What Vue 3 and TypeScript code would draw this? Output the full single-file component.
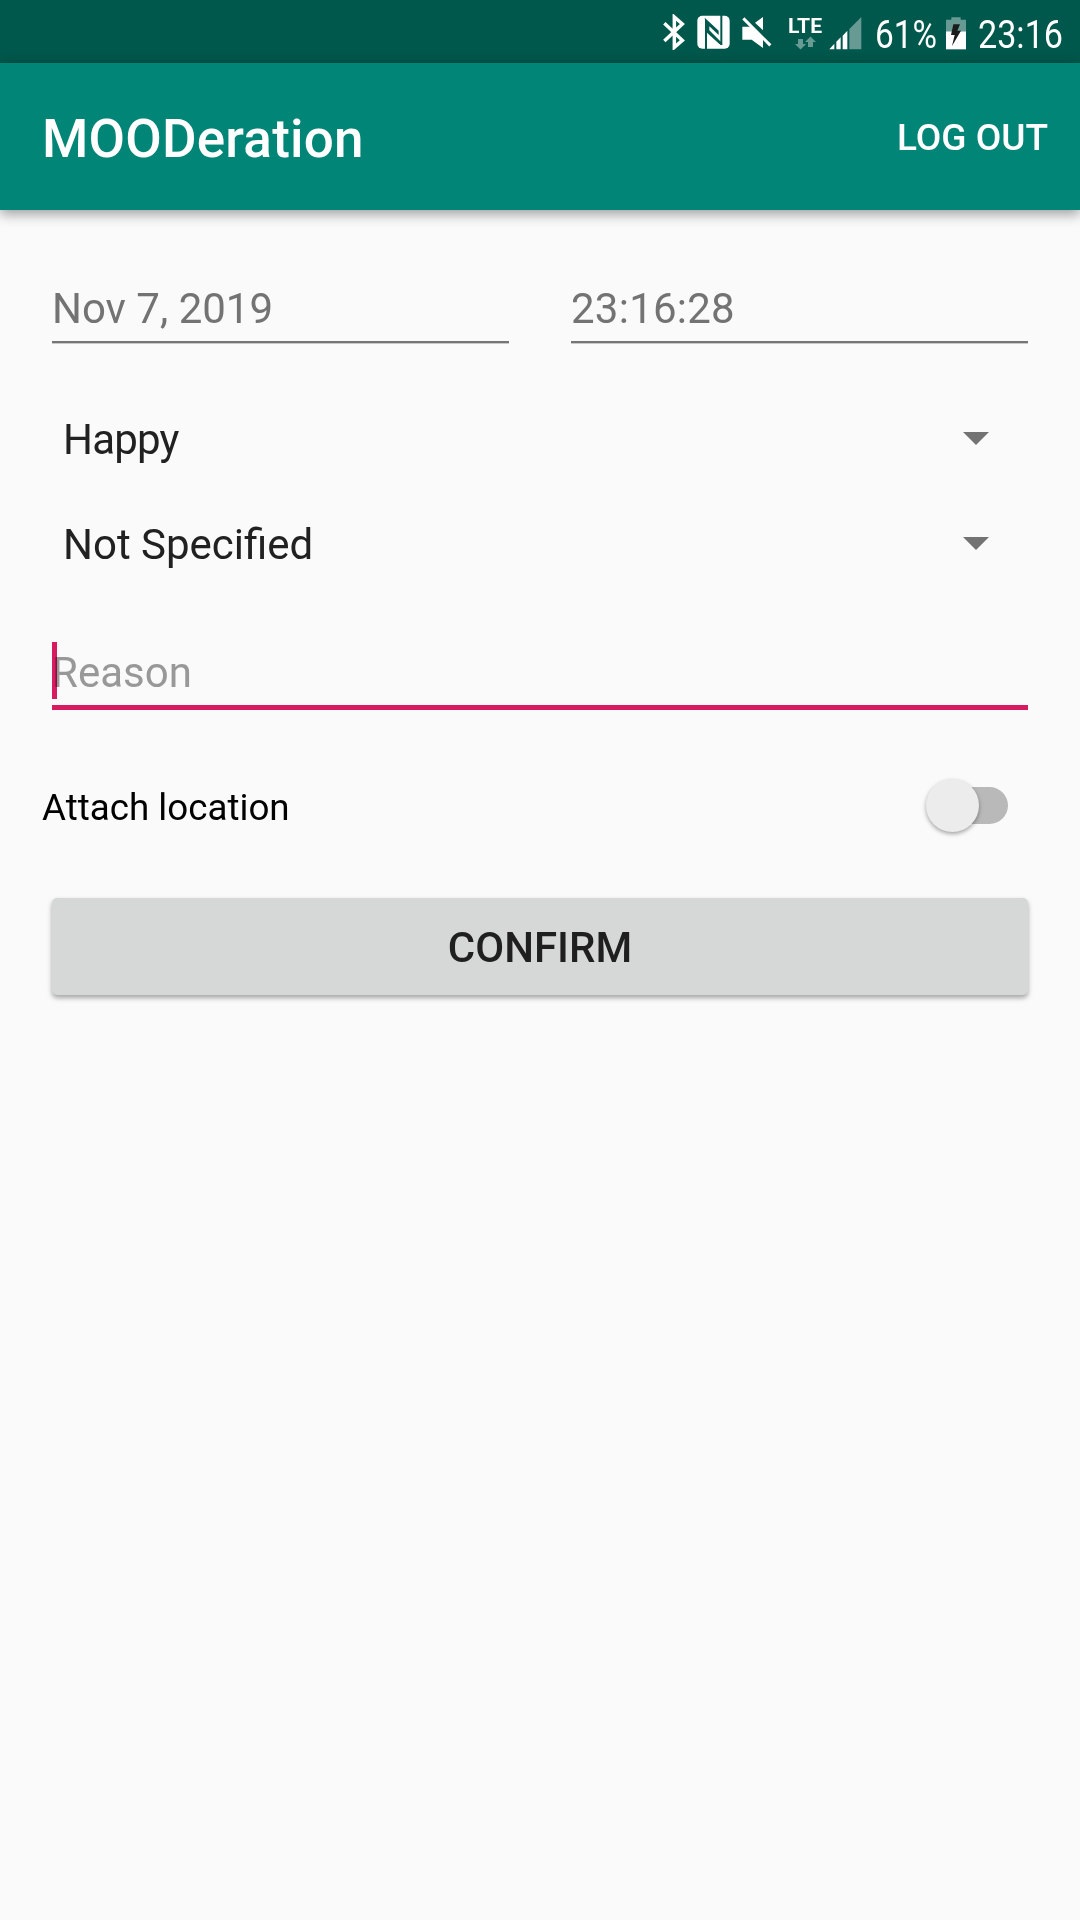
<script setup lang="ts">
import { ref } from 'vue'

const date = ref('Nov 7, 2019')
const time = ref('23:16:28')
const spinners = ref(['Happy', 'Not Specified'])
</script>

<template>
  <main class="screen">
    <header class="status">
      <svg class="bt" width="22" height="36" viewBox="41 43 66 108"><path d="M45 71 99 122 75 143V52L99 73 45 124" fill="none" stroke="#fff" stroke-width="10.500" /></svg>
      <svg class="nfc" width="34" height="34" viewBox="141 46 102 102">
        <rect x="142" y="48" width="97" height="99" rx="15" fill="#fff" />
        <path d="M164 54 206 93V106L178 80V92L216 130V136L208 133 171 99V148H165V60Z" fill="#00574b" />
        <path d="M211 46H217V136H211Z" fill="#00574b" />
      </svg>
      <svg class="mute" width="32" height="34" viewBox="273 48 96 102">
        <path d="M277 80H306L339 113V144L305 119H277ZM339 51V91L315 68Z" fill="#fff" />
        <path d="M280 55 361 136" stroke="#fff" stroke-width="9" />
      </svg>
      <svg class="lte" width="36" height="36" viewBox="786 15 36 36">
        <text x="788" y="33" font-size="20" font-weight="700" fill="#fff" textLength="34" lengthAdjust="spacingAndGlyphs">LTE</text>
        <path d="M798 39h5v5h3l-5.500 5.500-5.500-5.500h3zM808 47h5v-5h3l-5.500-5.500-5.500 5.500h3z" fill="#669a93" />
      </svg>
      <svg class="signal" width="33" height="34" viewBox="539 47 99 102">
        <path d="M636 50V147H600V86Z" fill="#669a93" />
        <path d="M594 91V147H580V106ZM574 111V147H561V124ZM555 130V147H540Z" fill="#fff" />
      </svg>
      <svg class="percent" width="62" height="40" viewBox="0 0 62 40"><text x="0" y="38" textLength="62" lengthAdjust="spacingAndGlyphs">61%</text></svg>
      <svg class="battery" width="20" height="33" viewBox="258 50 60 99">
        <path d="M258 58H274V51H302V58H318V93H258Z" fill="#669a93" />
        <path d="M258 93H318V147H258Z" fill="#fff" />
        <path d="M280 72H300L292 91H303L276 137 284 104H273Z" fill="#1c1c1c" />
      </svg>
      <svg class="clock" width="85" height="40" viewBox="0 0 85 40"><text x="0" y="38" textLength="85" lengthAdjust="spacingAndGlyphs">23:16</text></svg>
    </header>
    <nav class="appbar">
      <h1>MOODeration</h1>
      <button class="logout">LOG OUT</button>
    </nav>
    <section class="form">
      <div class="when">
        <div class="field">{{ date }}</div>
        <div class="field time">{{ time }}</div>
      </div>
      <div v-for="s in spinners" :key="s" class="spinner">
        <span :class="{ tight: s === 'Happy' }">{{ s }}</span>
        <svg width="26" height="13" viewBox="0 0 26 13"><path d="M0 0H26L13 13Z" fill="#737373" /></svg>
      </div>
      <div class="reason"><i class="caret"></i><span>Reason</span></div>
      <div class="attach">
        <span>Attach location</span>
        <div class="switch"><i class="thumb"></i></div>
      </div>
      <button class="confirm">CONFIRM</button>
    </section>
  </main>
</template>

<style>
body { margin: 0; background: #fafafa; }
</style>

<style scoped>
.screen {
  width: 1080px;
  height: 1920px;
  overflow: hidden;
  background: #fafafa;
  font-family: Roboto, sans-serif;
  font-size: 42px;
}
svg { display: block; flex: none; }
button { border: 0; padding: 0; font-family: inherit; }
.status {
  box-sizing: border-box;
  height: 63px;
  padding-left: 663px;
  display: flex;
  align-items: flex-start;
  background: #00574b;
}
.status text { font-family: Roboto, sans-serif; }
.bt { margin-top: 14px; }
.nfc { margin: 15px 0 0 12px; }
.mute { margin: 16px 0 0 10px; }
.lte { margin: 15px 0 0 13px; overflow: visible; }
.signal { margin: 16px 0 0 7px; }
.percent { margin: 9.5px 0 0 13px; font-size: 39.5px; fill: #fff; overflow: visible; }
.battery { margin: 17px 0 0 9px; }
.clock { margin: 9.5px 0 0 12px; font-size: 39.5px; fill: #fff; overflow: visible; }
.appbar {
  box-sizing: border-box;
  height: 147px;
  padding: 0 32px 0 42px;
  display: flex;
  align-items: center;
  justify-content: space-between;
  background: #008577;
  box-shadow: 0 4px 12px rgba(0, 0, 0, .38);
  color: #fff;
}
h1 { margin: 5px 0 0; font-size: 53px; font-weight: 500; line-height: 62px; letter-spacing: .2px; }
.logout { margin-top: 2px; background: none; color: #fff; font-size: 37px; font-weight: 500; line-height: 44px; }
.form { padding: 63px 52px 0; }
.when { display: flex; gap: 62px; }
.field {
  flex: 1;
  height: 68px;
  line-height: 72px;
  border-bottom: 2px solid #757575;
  box-shadow: 0 1px #c8cac8;
  color: #737373;
}
.time { letter-spacing: .25px; }
.spinner {
  height: 105px;
  padding: 0 39.5px 0 11px;
  display: flex;
  align-items: center;
  justify-content: space-between;
  color: #212121;
}
.spinner span { padding-top: 2px; line-height: 50px; }
.spinner .tight { letter-spacing: -.8px; }
.when + .spinner { margin-top: 43px; }
.reason {
  position: relative;
  height: 63px;
  margin-top: 46px;
  border-bottom: 5px solid #d81b60;
  color: #9b9b9b;
  line-height: 62px;
}
.caret { position: absolute; left: 0; top: 0; width: 5px; height: 57px; background: #d81b60; }
.reason span { position: relative; mix-blend-mode: multiply; }
.attach {
  height: 52px;
  margin: 69px 20px 0 -10px;
  display: flex;
  align-items: center;
  justify-content: space-between;
  font-size: 36.75px;
  color: #000;
}
.attach span { padding-top: 5px; }
.switch { position: relative; width: 74px; height: 37px; border-radius: 19px; background: #b9b9b9; }
.thumb {
  position: absolute;
  left: -8.5px;
  top: -7.5px;
  width: 53px;
  height: 53px;
  border-radius: 50%;
  background: #ececec;
  box-shadow: 0 2px 4px rgba(0, 0, 0, .35);
}
.confirm {
  display: block;
  width: 976px;
  height: 97px;
  margin-top: 66.5px;
  border-radius: 5px;
  background: #d6d8d7;
  box-shadow: 0 3px 5px rgba(0, 0, 0, .34);
  color: #1f1f1f;
  font-size: 42px;
  font-weight: 500;
  line-height: 100px;
}
</style>
